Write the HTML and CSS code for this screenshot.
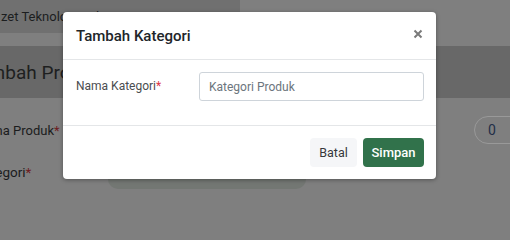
FILE: index.html
```html
<!DOCTYPE html>
<html lang="id">
<head>
<meta charset="utf-8">
<title>Tambah Kategori</title>
<link rel="stylesheet" href="styles.css">
</head>
<body>
<div class="page">
  <div class="topbar">
    <div class="brand">zet Teknologi Indonesia</div>
  </div>
  <div class="page-head"><h1 class="page-title">Tambah Produk</h1></div>
  <div class="form">
    <div class="form-row">
      <span class="form-label">Nama Produk<span class="req">*</span></span>
      <span class="num-pill">0</span>
    </div>
    <div class="form-row row-cat">
      <span class="form-label">Kategori<span class="req">*</span></span>
      <span class="select-box"></span>
    </div>
  </div>

  <div class="modal">
    <div class="modal-header">
      <h2 class="modal-title">Tambah Kategori</h2>
      <span class="modal-close" aria-label="Tutup">
        <svg width="10" height="10" viewBox="0 0 10 10"><path d="M1.5 1.5 L8.5 8.5 M8.5 1.5 L1.5 8.5" stroke="#7a7a7a" stroke-width="2" stroke-linecap="butt"/></svg>
      </span>
    </div>
    <div class="modal-body">
      <label class="field-label">Nama Kategori<span class="star">*</span></label>
      <input class="field-input" type="text" placeholder="Kategori Produk">
    </div>
    <div class="modal-footer">
      <button class="btn btn-light">Batal</button>
      <button class="btn btn-green">Simpan</button>
    </div>
  </div>
</div>
</body>
</html>
```

FILE: styles.css
```css
* { box-sizing: border-box; }
html, body { margin: 0; padding: 0; overflow: hidden; }
body {
  background: #7f7f7f;
  font-family: Roboto, "Liberation Sans", sans-serif;
}
.page {
  width: 510px;
  height: 200px;
  overflow: hidden;
  position: relative;
  display: flex;
  flex-direction: column;
}
.topbar { height: 46px; flex: none; }
.brand {
  width: 240px;
  height: 33px;
  background: #707070;
  border-radius: 0 0 10px 0;
  font-size: 13px;
  line-height: 33px;
  color: #1c1e1f;
  padding-left: 1px;
  white-space: nowrap;
  overflow: hidden;
}
.page-head {
  height: 52px;
  flex: none;
  background: #686868;
  display: flex;
  align-items: center;
}
.page-title {
  margin: 0 0 0 -32px;
  font-size: 19px;
  font-weight: 400;
  color: #1e1f20;
  white-space: nowrap;
}
.form { display: flex; flex-direction: column; margin-left: -25px; }
.form-row {
  display: flex;
  align-items: center;
  height: 42px;
  margin-top: 11px;
  position: relative;
}
.row-cat { margin-top: 0; }
.form-label { font-size: 13px; color: #1b1c1d; white-space: nowrap; }
.row-cat .form-label { font-size: 13.5px; }
.req { color: #6e1c22; }
.num-pill {
  margin-left: auto;
  margin-right: -14px;
  width: 50px;
  height: 28px;
  border: 1px solid #999;
  border-radius: 14px;
  font-size: 14px;
  line-height: 26px;
  padding-left: 13px;
  color: #1f2e48;
}
.select-box {
  position: absolute;
  left: 133px;
  top: -6px;
  width: 198px;
  height: 44px;
  background: #737773;
  border-radius: 0 0 10px 10px;
}

.modal {
  position: absolute;
  left: 63px;
  top: 12px;
  width: 373px;
  height: 167px;
  background: #fff;
  border-radius: 4px;
  box-shadow: 0 1px 4px rgba(0,0,0,.35);
  display: flex;
  flex-direction: column;
}
.modal-header {
  height: 48px;
  flex: none;
  border-bottom: 1px solid #e4e6e8;
  display: flex;
  align-items: center;
  justify-content: space-between;
  padding: 0 13px;
}
.modal-title {
  margin: 0;
  font-size: 15px;
  font-weight: 500;
  color: #212529;
}
.modal-close {
  display: flex;
  width: 10px;
  height: 10px;
  margin-right: 0;
  margin-top: -4px;
}
.modal-body {
  height: 66px;
  flex: none;
  border-bottom: 1px solid #e4e6e8;
  display: flex;
  align-items: flex-start;
  padding: 12px 12px 0 13px;
}
.field-label {
  width: 123px;
  font-size: 12px;
  line-height: 28px;
  color: #4a4d50;
}
.star { color: #dc3545; }
.field-input {
  width: 225px;
  height: 29px;
  border: 1px solid #ced4da;
  border-radius: 3px;
  padding: 0 9px;
  font-family: Roboto, "Liberation Sans", sans-serif;
  font-size: 12px;
  color: #495057;
  outline: none;
}
.field-input::placeholder { color: #6c757d; }
.modal-footer {
  flex: 1;
  display: flex;
  justify-content: flex-end;
  align-items: center;
  gap: 6px;
  padding: 0 12px 0 0;
}
.btn {
  height: 29px;
  border: none;
  border-radius: 4px;
  font-family: Roboto, "Liberation Sans", sans-serif;
  font-size: 13px;
  padding: 0;
}
.btn-light { width: 47px; background: #f5f6f8; color: #35383b; font-size: 12.5px; }
.btn-green { width: 61px; background: #31724b; color: #fff; font-weight: 500; }
```
